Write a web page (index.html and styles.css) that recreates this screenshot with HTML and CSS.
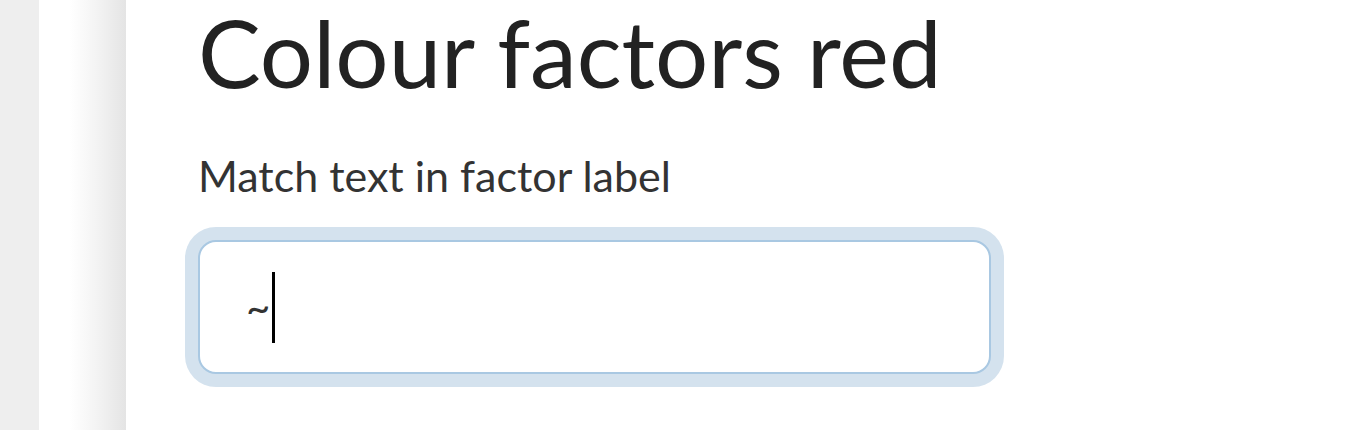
FILE: index.html
```html
<!DOCTYPE html>
<html lang="en">
<head>
  <meta charset="UTF-8">
  <meta name="viewport" content="width=device-width, initial-scale=1.0">
  <title>Colour factors red</title>
  <link rel="stylesheet" href="styles.css">
</head>
<body>
  <div class="page">
    <div class="rail"></div>
    <div class="rail-shadow"></div>

    <main class="content">
      <h1>Colour factors red</h1>

      <div class="form-group">
        <label for="match-input">Match text in factor label</label>
        <div class="text-input focused" id="match-input" role="textbox" tabindex="0">
          <span class="value">~</span><span class="caret"></span>
        </div>
      </div>
    </main>
  </div>
</body>
</html>
```
FILE: styles.css
```css
body {
  margin: 0;
  font-family: Lato, "Open Sans", sans-serif;
  color: #222;
  background-color: #fff;
}
.page {
  display: flex;
  min-height: 100vh;
  overflow: hidden;
}
.rail {
  width: 39px;
  flex-shrink: 0;
  background-color: #eeeeee;
}
.rail-shadow {
  width: 87px;
  flex-shrink: 0;
  background: linear-gradient(to right, #fff 0%, #fff 35%, #f4f4f4 65%, #e4e4e4 100%);
}
.content {
  flex: 1;
  padding-left: 72px;
}
h1 {
  font-size: 94px;
  font-weight: 400;
  line-height: 104px;
  margin: 0;
  color: #222;
}
.form-group {
  margin-top: 46px;
}
label {
  display: block;
  font-size: 43px;
  line-height: 52px;
  color: #333;
  margin-bottom: 38px;
}
.text-input {
  box-sizing: border-box;
  width: 793px;
  height: 134px;
  padding-left: 46px;
  display: flex;
  align-items: center;
  border: 2px solid #a9c8e2;
  border-radius: 18px;
  background-color: #fff;
  font-size: 42px;
  color: #333;
  outline: none;
}
.text-input.focused {
  box-shadow: 0 0 0 13px #d4e2ee;
}
.caret {
  display: inline-block;
  width: 3px;
  height: 71px;
  margin-left: 2px;
  background-color: #000;
}
```
